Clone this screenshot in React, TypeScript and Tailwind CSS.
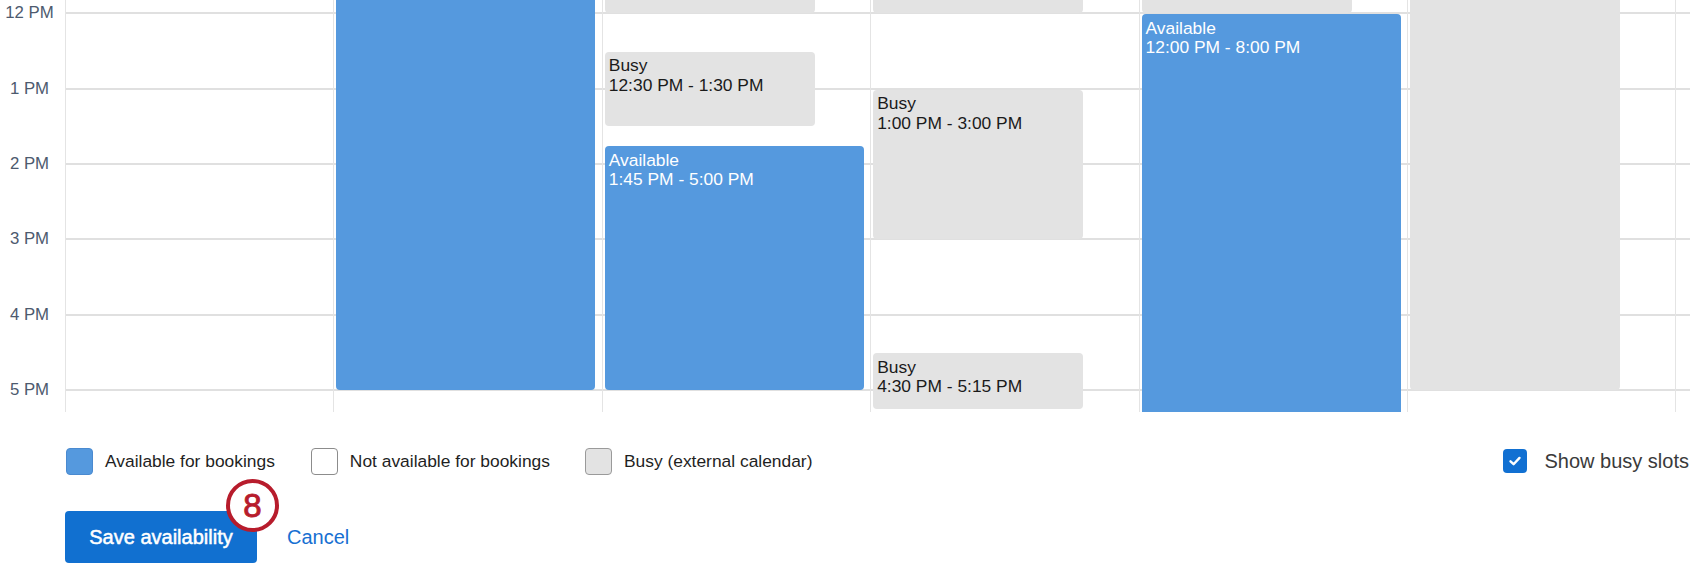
import React from 'react';

// one hour on the grid, in px; y of the 12 PM line inside the visible window
const HOUR = 75.34;
const NOON_Y = 13.3;

type Slot = {
  kind: 'available' | 'busy';
  start: number; // minutes from 12 PM
  end: number;
  title?: string;
  range?: string;
};

const hourLabels = ['12 PM', '1 PM', '2 PM', '3 PM', '4 PM', '5 PM'];

const days: Slot[][] = [
  [],
  [{ kind: 'available', start: -300, end: 300 }],
  [
    { kind: 'busy', start: -30, end: 0 },
    { kind: 'busy', start: 30, end: 90, title: 'Busy', range: '12:30 PM - 1:30 PM' },
    { kind: 'available', start: 105, end: 300, title: 'Available', range: '1:45 PM - 5:00 PM' },
  ],
  [
    { kind: 'busy', start: -30, end: 0 },
    { kind: 'busy', start: 60, end: 180, title: 'Busy', range: '1:00 PM - 3:00 PM' },
    { kind: 'busy', start: 270, end: 315, title: 'Busy', range: '4:30 PM - 5:15 PM' },
  ],
  [
    { kind: 'busy', start: -60, end: 0 },
    { kind: 'available', start: 0, end: 480, title: 'Available', range: '12:00 PM - 8:00 PM' },
  ],
  [{ kind: 'busy', start: -300, end: 300 }],
];

const yOf = (minutes: number) => NOON_Y + (minutes / 60) * HOUR;

function SlotBlock({ slot }: { slot: Slot }) {
  const top = yOf(slot.start) + 1;
  const height = yOf(slot.end) - top;
  const isAvailable = slot.kind === 'available';

  return (
    <div
      className={`absolute left-[2px] overflow-hidden rounded-[4px] px-[4px] pt-[4.5px] text-[17.4px] leading-[19.5px] ${
        isAvailable ? 'w-[259px] bg-[#5599de] text-white' : 'w-[210px] bg-[#e3e3e3] text-[#1a1a1a]'
      }`}
      style={{ top, height }}
    >
      {slot.title && <div>{slot.title}</div>}
      {slot.range && <div>{slot.range}</div>}
    </div>
  );
}

function WeekGrid() {
  return (
    <div className="flex h-[412px] w-[1690px] overflow-hidden">
      <div className="relative w-[66px] shrink-0 border-r border-[#e4e4e4]">
        {hourLabels.map((label, i) => (
          <div
            key={label}
            className="absolute left-0 w-[59px] text-center text-[16.8px] leading-[20px] text-[#4d5a6e]"
            style={{ top: NOON_Y + i * HOUR - 10 }}
          >
            {label}
          </div>
        ))}
      </div>

      <div className="relative flex flex-1">
        {hourLabels.map((label, i) => (
          <div
            key={label}
            className="absolute left-0 right-0 h-[2px] bg-[#e0e0e0]"
            style={{ top: NOON_Y + i * HOUR - 1 }}
          />
        ))}

        {days.map((slots, d) => (
          <div key={d} className="relative w-[268.4px] shrink-0 border-r border-[#e4e4e4]">
            {slots.map((slot, i) => (
              <SlotBlock key={i} slot={slot} />
            ))}
          </div>
        ))}
      </div>
    </div>
  );
}

function Legend() {
  return (
    <div className="mt-[35px] flex h-[28px] items-center pl-[66px] pr-[11px] text-[17.4px] text-[#1f1f1f]">
      <div className="h-[27px] w-[27px] rounded-[4px] border border-[#4a8ad0] bg-[#5599de]" />
      <span className="ml-[12px]">Available for bookings</span>

      <div className="ml-[36px] h-[27px] w-[27px] rounded-[4px] border border-[#8c8c8c] bg-white" />
      <span className="ml-[12px]">Not available for bookings</span>

      <div className="ml-[35px] h-[27px] w-[27px] rounded-[4px] border border-[#9a9a9a] bg-[#e3e3e3]" />
      <span className="ml-[12px]">Busy (external calendar)</span>

      <label className="ml-auto flex items-center">
        <span className="flex h-[24px] w-[24px] items-center justify-center rounded-[4px] bg-[#1170d2]">
          <svg width="14" height="14" viewBox="0 0 14 14" fill="none">
            <path d="M2.5 7.3 5.6 10.2 11.5 3.9" stroke="white" strokeWidth="2.4" strokeLinecap="round" strokeLinejoin="round" />
          </svg>
        </span>
        <span className="ml-[17px] text-[20px] text-[#3a3a3a]">Show busy slots</span>
      </label>
    </div>
  );
}

function Actions() {
  return (
    <div className="mt-[36px] flex items-center pl-[65px]">
      <div className="relative">
        <button className="h-[52px] w-[192px] rounded-[4px] bg-[#1170d0] text-[20px] text-white [-webkit-text-stroke:0.5px_white]">
          Save availability
        </button>
        <div className="absolute left-[161px] top-[-32px] flex h-[53px] w-[53px] items-center justify-center rounded-full border-[4px] border-[#b71c2c] bg-white text-[33px] leading-none text-[#b71c2c] [-webkit-text-stroke:0.9px_#b71c2c]">
          8
        </div>
      </div>
      <button className="ml-[30px] text-[20px] text-[#1770d2]">Cancel</button>
    </div>
  );
}

export default function App() {
  return (
    <div className="h-[582px] w-[1700px] overflow-hidden bg-white font-['Liberation_Sans',Arial,sans-serif]">
      <WeekGrid />
      <Legend />
      <Actions />
    </div>
  );
}
